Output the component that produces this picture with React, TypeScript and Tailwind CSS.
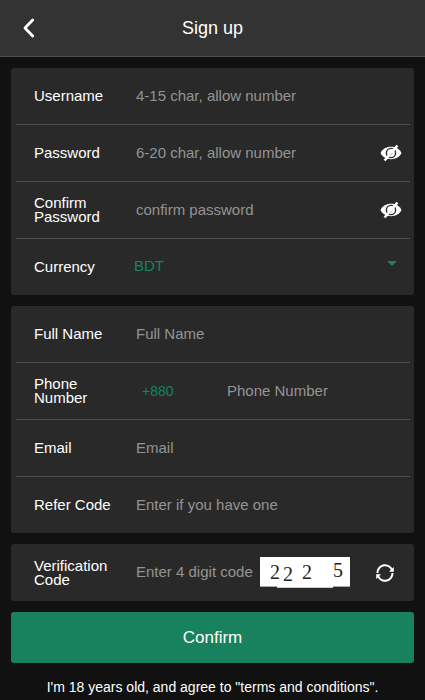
import { useState, type ReactNode } from "react";

const inputClass =
  "h-full w-full min-w-0 flex-1 bg-transparent px-0.5 pb-0.5 text-[15px] text-white outline-none placeholder:text-[#949494]";

function EyeSlashIcon() {
  return (
    <svg viewBox="0 0 22 18" className="h-[18px] w-[22px]" aria-hidden="true">
      <path
        d="M0.500 9C2.500 5 6.200 2.800 11 2.800S19.500 5 21.500 9C19.500 13 15.800 15.200 11 15.200S2.500 13 0.500 9z"
        fill="#fff"
      />
      <circle cx="11" cy="9" r="4.600" fill="none" stroke="#292929" strokeWidth="1.400" />
      <circle cx="11" cy="9" r="3.200" fill="#fff" />
      <path d="M12.200 9.200L9.600 12.200" stroke="#292929" strokeWidth="0.800" />
      <path d="M4.600 16.500L17.400 1.500" stroke="#fff" strokeWidth="2.500" />
    </svg>
  );
}

function RefreshIcon() {
  return (
    <svg viewBox="0 0 20 20" className="h-5 w-5" aria-hidden="true">
      <g fill="none" stroke="#fff" strokeWidth="2">
        <path d="M2.500 10A7.500 7.500 0 0 1 17.300 8" />
        <path d="M17.500 10A7.500 7.500 0 0 1 2.700 12" />
      </g>
      <path d="M18.800 4v4.800h-4.800z" fill="#fff" />
      <path d="M1.200 16v-4.800h4.800z" fill="#fff" />
    </svg>
  );
}

function Captcha() {
  return (
    <svg
      viewBox="0 0 90 31"
      className="h-[31px] w-[90px] shrink-0"
      role="img"
      aria-label="Verification code"
    >
      <path d="M0 0h90v29H0z" fill="#fff" />
      <path d="M0 29h17v1H0zM73 29h17v1H73z" fill="#aaa" />
      <path d="M17 29h56v1H17z" fill="#fff" />
      <path d="M17 30h56v1H17z" fill="#ccc" />
      <g className="font-['Liberation_Serif',serif] text-[20px]" fill="#222">
        <text x="10" y="22">2</text>
        <text x="23" y="24">2</text>
        <text x="42" y="22">2</text>
        <text x="73" y="20">5</text>
      </g>
    </svg>
  );
}

function Card({ children }: { children: ReactNode }) {
  return (
    <div className="divide-y divide-[#4d4d4d] rounded-[3px] bg-[#292929] pr-1 pl-[5px]">
      {children}
    </div>
  );
}

function Row({ id, label, children }: { id: string; label: string; children: ReactNode }) {
  return (
    <div className="flex h-[57px] items-center pl-[18px] last:h-14 only:h-[57px]">
      <label htmlFor={id} className="w-[100px] shrink-0 pr-5 leading-[14px] text-white">
        {label}
      </label>
      {children}
    </div>
  );
}

function PasswordField({ id, placeholder }: { id: string; placeholder: string }) {
  const [visible, setVisible] = useState(false);

  return (
    <>
      <input
        id={id}
        type={visible ? "text" : "password"}
        placeholder={placeholder}
        className={inputClass}
      />
      <button
        type="button"
        aria-label="Toggle password"
        onClick={() => setVisible(!visible)}
        className="mr-2 shrink-0"
      >
        <EyeSlashIcon />
      </button>
    </>
  );
}

export default function App() {
  return (
    <div className="min-h-screen bg-[#111] font-['Liberation_Sans',Arial,sans-serif] text-[15px]">
      <header className="grid h-[57px] grid-cols-[1fr_auto_1fr] items-center border-b border-[#505050] bg-[#333] text-white">
        <button type="button" aria-label="Back" className="ml-5 justify-self-start">
          <svg viewBox="0 0 18 22" className="h-[22px] w-[18px]" aria-hidden="true">
            <path
              d="M12.700 3L5 11l7.700 8"
              fill="none"
              stroke="#fff"
              strokeWidth="2.800"
              strokeLinecap="round"
              strokeLinejoin="round"
            />
          </svg>
        </button>
        <h1 className="text-lg">Sign up</h1>
      </header>

      <form className="flex flex-col gap-[11px] p-[11px]" onSubmit={(e) => e.preventDefault()}>
        <Card>
          <Row id="username" label="Username">
            <input id="username" placeholder="4-15 char, allow number" className={inputClass} />
          </Row>
          <Row id="password" label="Password">
            <PasswordField id="password" placeholder="6-20 char, allow number" />
          </Row>
          <Row id="confirm" label="Confirm Password">
            <PasswordField id="confirm" placeholder="confirm password" />
          </Row>
          <Row id="currency" label="Currency">
            <select
              id="currency"
              className="h-full flex-1 appearance-none bg-transparent pb-0.5 text-[#17825d] outline-none"
            >
              <option>BDT</option>
            </select>
            <svg viewBox="0 0 10 5" className="mr-[13px] mb-2 h-[5px] w-[10px]" aria-hidden="true">
              <path d="M0 0h10L5 5z" fill="#17825d" />
            </svg>
          </Row>
        </Card>

        <Card>
          <Row id="fullname" label="Full Name">
            <input id="fullname" placeholder="Full Name" className={inputClass} />
          </Row>
          <Row id="phone" label="Phone Number">
            <span className="w-[91px] shrink-0 pl-2 text-sm text-[#17825d]">+880</span>
            <input id="phone" type="tel" placeholder="Phone Number" className={inputClass} />
          </Row>
          <Row id="email" label="Email">
            <input id="email" type="email" placeholder="Email" className={inputClass} />
          </Row>
          <Row id="refer" label="Refer Code">
            <input id="refer" placeholder="Enter if you have one" className={inputClass} />
          </Row>
        </Card>

        <Card>
          <Row id="code" label="Verification Code">
            <input id="code" placeholder="Enter 4 digit code" className={inputClass} />
            <Captcha />
            <button type="button" aria-label="Refresh code" className="mr-[15px] ml-[25px] shrink-0">
              <RefreshIcon />
            </button>
          </Row>
        </Card>

        <button type="submit" className="h-[51px] rounded-[3px] bg-[#17825d] text-[17px] text-white">
          Confirm
        </button>

        <p className="pt-1 text-center text-sm leading-[18px] text-white">
          I'm 18 years old, and agree to "terms and conditions".
        </p>
      </form>
    </div>
  );
}
